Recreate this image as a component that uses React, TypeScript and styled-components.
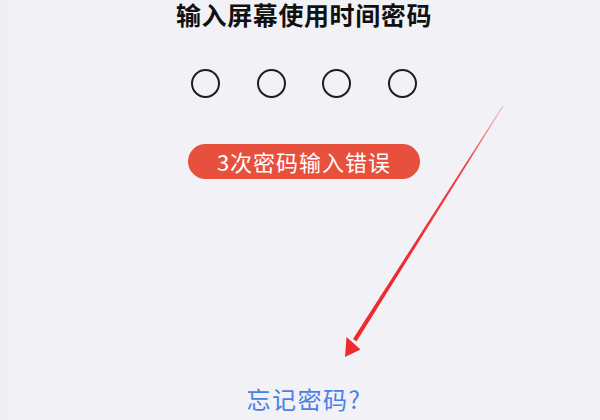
import React from 'react';
import styled, { createGlobalStyle } from 'styled-components';

const GlobalStyle = createGlobalStyle`
  html, body {
    margin: 0;
    padding: 0;
    background: #f2f1f6;
  }
  body {
    font-family: 'Noto Sans CJK SC', 'Noto Sans', sans-serif;
  }
`;

const Screen = styled.div`
  position: relative;
  width: 600px;
  height: 420px;
  overflow: hidden;
  background: linear-gradient(to right, #efeff1 0, #efeff1 8px, #f2f1f6 10px);
  display: flex;
  flex-direction: column;
  align-items: center;
  padding-left: 8px;
  box-sizing: border-box;
`;

const Title = styled.h1`
  margin: 0;
  font-size: 25px;
  line-height: 28px;
  font-weight: 700;
  color: #111111;
  letter-spacing: 0.6px;
`;

const DotRow = styled.div`
  display: flex;
  gap: 36.5px;
  margin-top: 41px;
`;

const Dot = styled.span`
  width: 29px;
  height: 29px;
  box-sizing: border-box;
  border: 2px solid #1e1e1e;
  border-radius: 50%;
`;

const ErrorPill = styled.div`
  margin-top: 46px;
  width: 232px;
  height: 35px;
  border-radius: 18px;
  background: #e8503e;
  color: #ffffff;
  font-size: 22px;
  line-height: 35px;
  text-align: center;
  letter-spacing: 1px;
`;

const ForgotLink = styled.a`
  margin-top: auto;
  margin-bottom: 6px;
  font-size: 24px;
  line-height: 30px;
  color: #4a80e3;
  letter-spacing: 1.5px;
  text-decoration: none;
  cursor: pointer;
`;

const Annotation = styled.svg`
  position: absolute;
  left: 0;
  top: 0;
  pointer-events: none;
`;

export default function App() {
  return (
    <>
      <GlobalStyle />
      <Screen>
        <Title>输入屏幕使用时间密码</Title>
        <DotRow>
          <Dot />
          <Dot />
          <Dot />
          <Dot />
        </DotRow>
        <ErrorPill>3次密码输入错误</ErrorPill>
        <ForgotLink>忘记密码?</ForgotLink>
        <Annotation width="600" height="420" viewBox="0 0 600 420">
          <defs>
            <linearGradient id="tail" x1="503" y1="106" x2="400" y2="270" gradientUnits="userSpaceOnUse">
              <stop offset="0" stopColor="#f3b0b4" />
              <stop offset="0.35" stopColor="#ee4048" />
              <stop offset="1" stopColor="#ee2a2e" />
            </linearGradient>
          </defs>
          <polygon
            points="503.5,106 502.5,106 353,339 356.5,341.5"
            fill="url(#tail)"
          />
          <polygon points="345,357 346.5,337 360.5,349.5" fill="#ee2a2e" />
        </Annotation>
      </Screen>
    </>
  );
}
